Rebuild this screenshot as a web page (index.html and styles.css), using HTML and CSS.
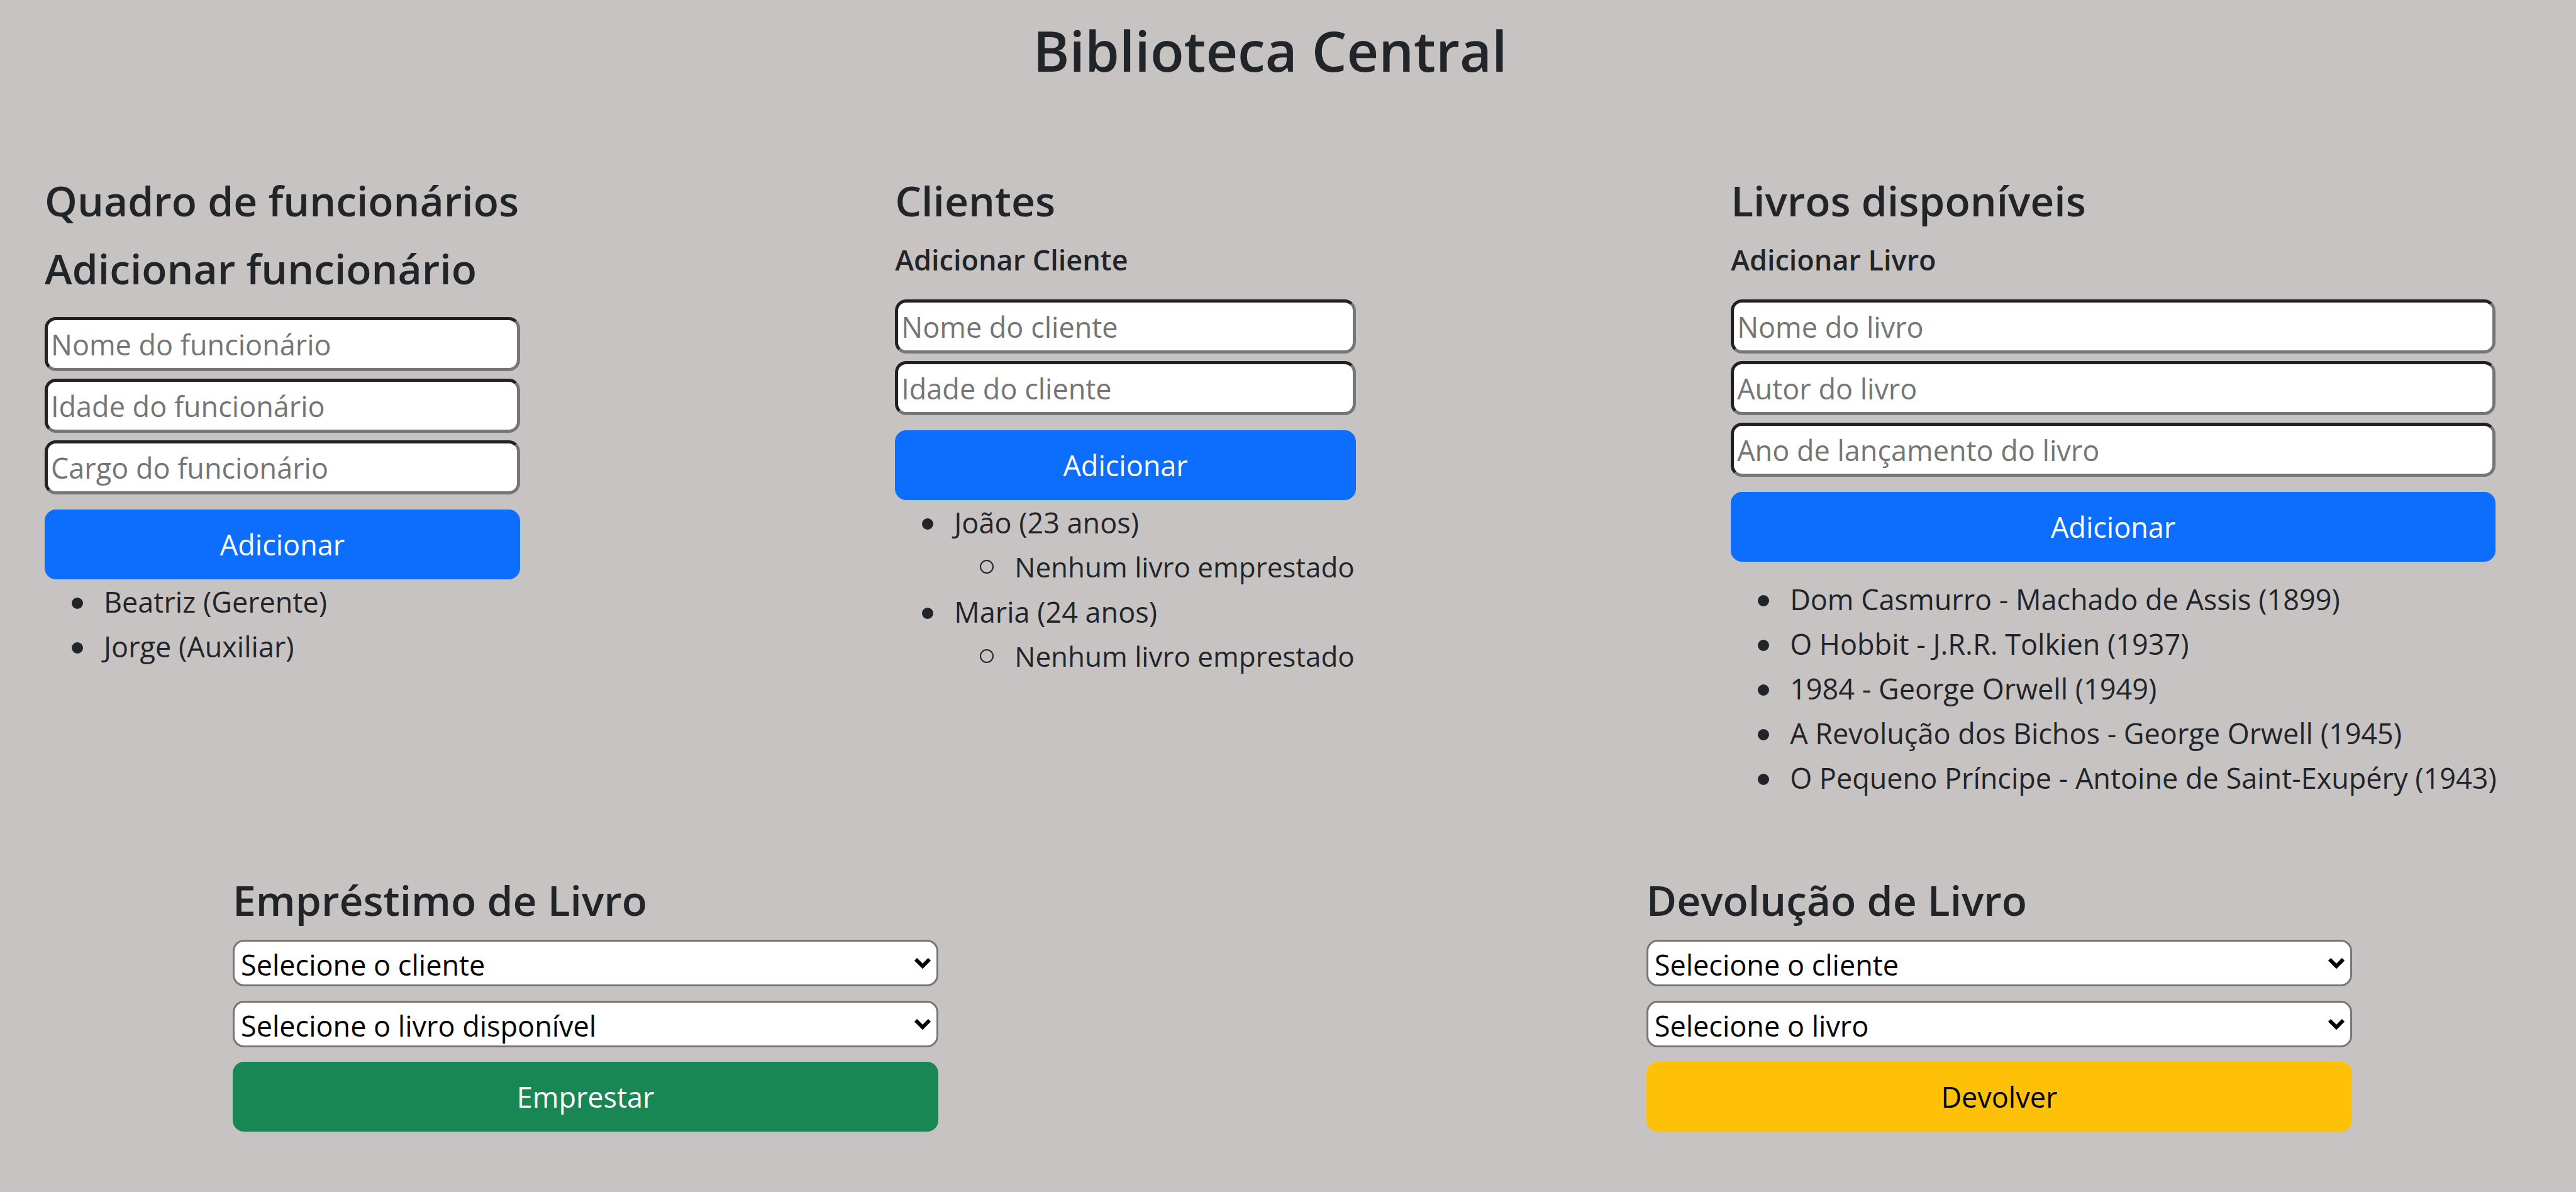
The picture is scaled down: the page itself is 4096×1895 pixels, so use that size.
FILE: index.html
```html
<!DOCTYPE html>
<html lang="pt-BR">
<head>
<meta charset="utf-8">
<title>Biblioteca Central</title>
<link rel="stylesheet" href="styles.css">
</head>
<body>
<header class="page-header">
  <h1 class="page-title">Biblioteca Central</h1>
</header>
<main>
  <div class="catalog">
    <section class="panel panel-staff">
      <h2 class="heading">Quadro de funcionários</h2>
      <h2 class="heading">Adicionar funcionário</h2>
      <form class="form">
        <input class="field" type="text" aria-label="Nome do funcionário" placeholder="Nome do funcionário">
        <input class="field" type="text" aria-label="Idade do funcionário" placeholder="Idade do funcionário">
        <input class="field" type="text" aria-label="Cargo do funcionário" placeholder="Cargo do funcionário">
        <button class="btn btn-primary" type="button">Adicionar</button>
      </form>
      <ul class="list">
        <li>Beatriz (Gerente)</li>
        <li>Jorge (Auxiliar)</li>
      </ul>
    </section>
    <section class="panel panel-clients">
      <h2 class="heading">Clientes</h2>
      <h3 class="subheading">Adicionar Cliente</h3>
      <form class="form">
        <input class="field" type="text" aria-label="Nome do cliente" placeholder="Nome do cliente">
        <input class="field" type="text" aria-label="Idade do cliente" placeholder="Idade do cliente">
        <button class="btn btn-primary" type="button">Adicionar</button>
      </form>
      <ul class="list">
        <li>João (23 anos)
          <ul class="list list-nested"><li>Nenhum livro emprestado</li></ul>
        </li>
        <li>Maria (24 anos)
          <ul class="list list-nested"><li>Nenhum livro emprestado</li></ul>
        </li>
      </ul>
    </section>
    <section class="panel panel-books">
      <h2 class="heading">Livros disponíveis</h2>
      <h3 class="subheading">Adicionar Livro</h3>
      <form class="form">
        <input class="field" type="text" aria-label="Nome do livro" placeholder="Nome do livro">
        <input class="field" type="text" aria-label="Autor do livro" placeholder="Autor do livro">
        <input class="field" type="text" aria-label="Ano de lançamento do livro" placeholder="Ano de lançamento do livro">
        <button class="btn btn-primary" type="button">Adicionar</button>
      </form>
      <ul class="list list-books">
        <li>Dom Casmurro - Machado de Assis (1899)</li>
        <li>O Hobbit - J.R.R. Tolkien (1937)</li>
        <li>1984 - George Orwell (1949)</li>
        <li>A Revolução dos Bichos - George Orwell (1945)</li>
        <li>O Pequeno Príncipe - Antoine de Saint-Exupéry (1943)</li>
      </ul>
    </section>
  </div>
  <div class="loans">
    <section class="loan">
      <h2 class="heading">Empréstimo de Livro</h2>
      <form class="loan-form">
        <div class="picker">
          <select class="select" aria-label="Cliente"><option>Selecione o cliente</option></select>
          <svg class="chevron" viewBox="0 0 26 18" aria-hidden="true"><path d="M2 3 L13 14 L24 3"/></svg>
        </div>
        <div class="picker">
          <select class="select" aria-label="Livro disponível"><option>Selecione o livro disponível</option></select>
          <svg class="chevron" viewBox="0 0 26 18" aria-hidden="true"><path d="M2 3 L13 14 L24 3"/></svg>
        </div>
        <button class="btn btn-success" type="button">Emprestar</button>
      </form>
    </section>
    <section class="loan">
      <h2 class="heading">Devolução de Livro</h2>
      <form class="loan-form">
        <div class="picker">
          <select class="select" aria-label="Cliente"><option>Selecione o cliente</option></select>
          <svg class="chevron" viewBox="0 0 26 18" aria-hidden="true"><path d="M2 3 L13 14 L24 3"/></svg>
        </div>
        <div class="picker">
          <select class="select" aria-label="Livro"><option>Selecione o livro</option></select>
          <svg class="chevron" viewBox="0 0 26 18" aria-hidden="true"><path d="M2 3 L13 14 L24 3"/></svg>
        </div>
        <button class="btn btn-warning" type="button">Devolver</button>
      </form>
    </section>
  </div>
</main>
</body>
</html>
```
FILE: styles.css
```css
* {
  box-sizing: border-box;
}

body {
  margin: 0;
  background: #c7c3c2;
  color: #212529;
  font-family: "Open Sans", "Noto Sans", sans-serif;
  font-size: 45px;
  line-height: 70px;
}

h1, h2, h3, ul {
  margin: 0;
}

.page-header {
  padding: 22px 128px 0 71px;
  text-align: center;
}

.page-title {
  font-size: 88px;
  font-weight: 600;
  line-height: 116px;
}

.catalog {
  display: flex;
  justify-content: space-between;
  align-items: flex-start;
  padding: 138px 128px 0 71px;
}

.panel-staff {
  width: 19.4%;
}

.panel-clients {
  width: 18.8%;
}

.panel-books {
  width: 31.2%;
}

.heading {
  padding-bottom: 24px;
  font-size: 66px;
  font-weight: 600;
  line-height: 84px;
  white-space: nowrap;
}

.subheading {
  padding-bottom: 34px;
  font-size: 45px;
  font-weight: 600;
  line-height: 58px;
}

.form {
  display: flex;
  flex-direction: column;
  gap: 12px;
}

.panel-staff .form {
  padding-top: 12px;
}

.field {
  width: 100%;
  height: 86px;
  padding: 0 5px;
  border: 5px inset #767676;
  border-radius: 18px;
  background: #fff;
  color: #212529;
  font: inherit;
}

.field::placeholder {
  color: #757575;
  opacity: 1;
}

.btn {
  width: 100%;
  height: 111px;
  padding: 0;
  border: 0;
  border-radius: 18px;
  font: inherit;
}

.form .btn {
  margin-top: 12px;
}

.btn-primary {
  background: #0d6efd;
  color: #fff;
}

.btn-success {
  background: #198754;
  color: #fff;
}

.btn-warning {
  background: #ffc107;
  color: #000;
}

.list {
  padding-left: 94px;
  line-height: 71px;
  list-style: none;
  white-space: nowrap;
}

.list li::before {
  content: "";
  display: inline-block;
  width: 18px;
  height: 18px;
  margin: 0 33px 0 -51px;
  border-radius: 50%;
  background: #212529;
  vertical-align: 6px;
}

.list-nested {
  padding-left: 92px;
  font-size: 44px;
}

.list-nested li::before {
  border: 2px solid #212529;
  background: none;
}

.list-books {
  padding-top: 24px;
}

.loans {
  display: flex;
  justify-content: space-between;
  padding: 116px 356px 0 370px;
}

.loan {
  width: 33.3%;
}

.loan .heading {
  padding-bottom: 22px;
}

.loan-form {
  display: flex;
  flex-direction: column;
  gap: 23px;
}

.picker {
  display: grid;
  align-items: center;
}

.select {
  grid-area: 1 / 1;
  width: 100%;
  height: 74px;
  padding: 2px 10px 0;
  border: 3px solid #767676;
  border-radius: 18px;
  appearance: none;
  background: #fff;
  color: #000;
  font: inherit;
}

.chevron {
  grid-area: 1 / 1;
  justify-self: end;
  width: 26px;
  height: 18px;
  margin-right: 12px;
  fill: none;
  stroke: #000;
  stroke-width: 6;
  pointer-events: none;
}
```
